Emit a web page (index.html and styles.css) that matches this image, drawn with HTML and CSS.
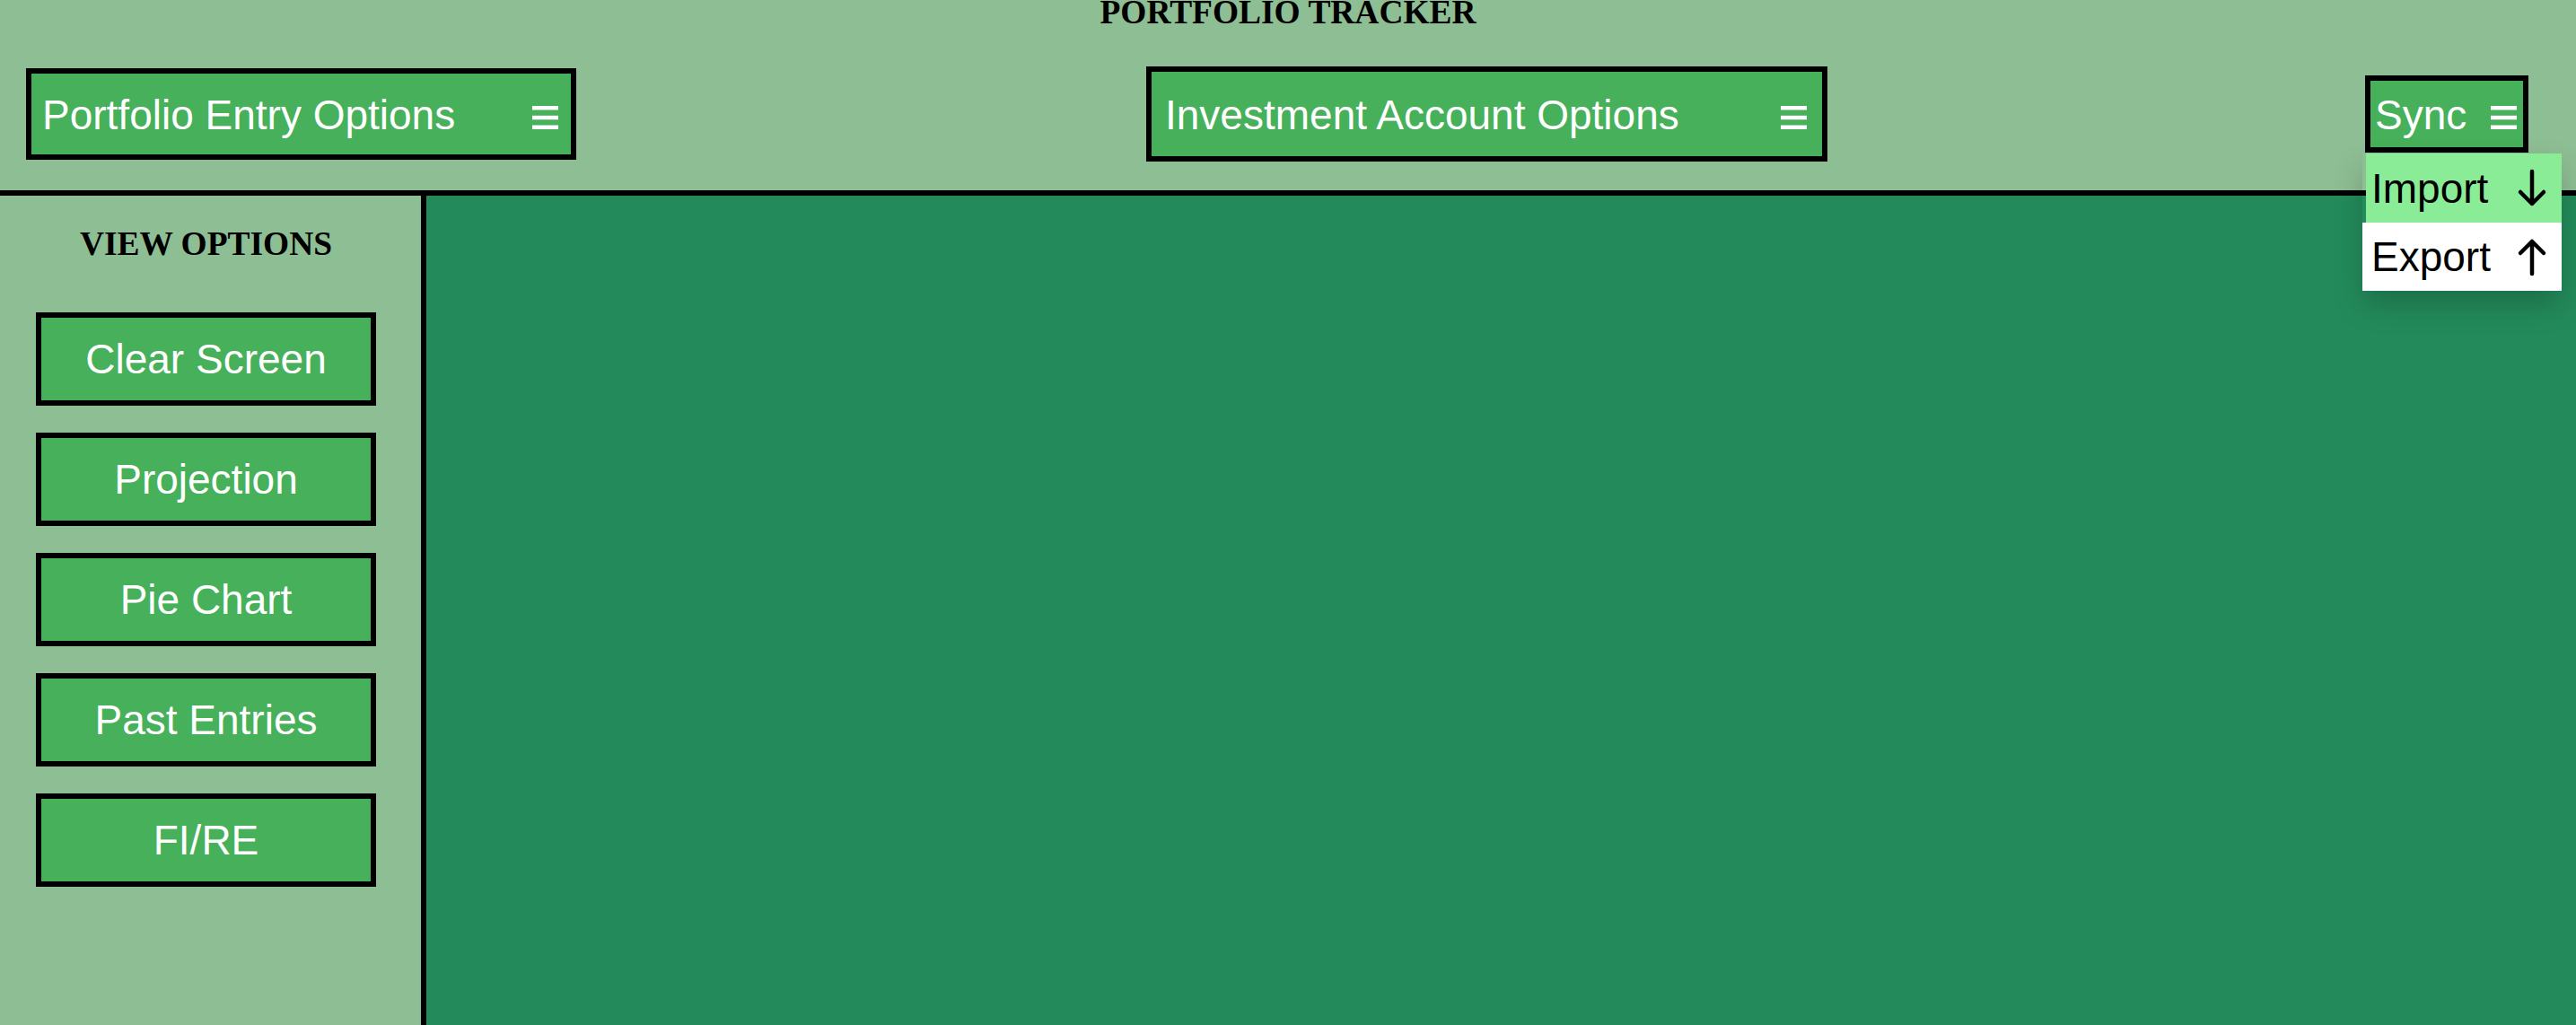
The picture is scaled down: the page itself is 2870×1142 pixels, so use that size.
FILE: index.html
```
<!DOCTYPE html>
<html lang="en">
<head>
<meta charset="utf-8">
<title>Portfolio Tracker</title>
<link rel="stylesheet" href="styles.css">
</head>
<body>
<header class="header">
  <h3 class="title">PORTFOLIO TRACKER</h3>
  <div class="toolbar">
    <div class="menu-btn entry">
      <span class="label">Portfolio Entry Options</span>
      <svg class="burger" width="29" height="26" viewBox="0 0 29 26"><rect x="0" y="0" width="29" height="4.5" fill="#fff"/><rect x="0" y="10.8" width="29" height="4.5" fill="#fff"/><rect x="0" y="21.5" width="29" height="4.5" fill="#fff"/></svg>
    </div>
    <div class="menu-btn invest">
      <span class="label">Investment Account Options</span>
      <svg class="burger" width="29" height="26" viewBox="0 0 29 26"><rect x="0" y="0" width="29" height="4.5" fill="#fff"/><rect x="0" y="10.8" width="29" height="4.5" fill="#fff"/><rect x="0" y="21.5" width="29" height="4.5" fill="#fff"/></svg>
    </div>
    <div class="sync-wrap">
      <div class="menu-btn sync">
        <span class="label">Sync</span>
        <svg class="burger" width="29" height="26" viewBox="0 0 29 26"><rect x="0" y="0" width="29" height="4.5" fill="#fff"/><rect x="0" y="10.8" width="29" height="4.5" fill="#fff"/><rect x="0" y="21.5" width="29" height="4.5" fill="#fff"/></svg>
      </div>
      <div class="dropdown">
        <div class="drop-item import">
          <span>Import</span>
          <svg width="34" height="43" viewBox="0 0 34 43"><path d="M17 3 V39 M4 26 L17 39 L30 26" fill="none" stroke="#000" stroke-width="4.5" stroke-linecap="round" stroke-linejoin="round"/></svg>
        </div>
        <div class="drop-item export">
          <span>Export</span>
          <svg width="34" height="43" viewBox="0 0 34 43"><path d="M17 40 V4 M4 17 L17 4 L30 17" fill="none" stroke="#000" stroke-width="4.5" stroke-linecap="round" stroke-linejoin="round"/></svg>
        </div>
      </div>
    </div>
  </div>
</header>
<div class="content">
  <aside class="sidebar">
    <h3 class="side-title">VIEW OPTIONS</h3>
    <div class="side-buttons">
      <div class="side-btn">Clear Screen</div>
      <div class="side-btn">Projection</div>
      <div class="side-btn">Pie Chart</div>
      <div class="side-btn">Past Entries</div>
      <div class="side-btn">FI/RE</div>
    </div>
  </aside>
  <main class="main"></main>
</div>
</body>
</html>
```
FILE: styles.css
```
html, body {
  margin: 0;
  padding: 0;
}
body {
  width: 2870px;
  height: 1142px;
  overflow: hidden;
  display: flex;
  flex-direction: column;
  background: #238b5b;
  font-family: "Liberation Sans", Arial, sans-serif;
}
.header {
  box-sizing: border-box;
  height: 218px;
  flex: none;
  background: #8ebe94;
  border-bottom: 6px solid #000;
  position: relative;
  z-index: 2;
}
.title {
  margin: 0;
  font-family: "Liberation Serif", "Times New Roman", serif;
  font-weight: 700;
  font-size: 37.44px;
  line-height: 28px;
  text-align: center;
  color: #000;
}
.toolbar {
  display: flex;
  align-items: center;
  height: 106px;
  margin-top: 46px;
  padding-left: 29px;
}
.menu-btn {
  box-sizing: border-box;
  display: flex;
  align-items: center;
  justify-content: space-between;
  border: 6px solid #000;
  background: #46b05a;
  color: #fff;
  font-size: 46px;
  white-space: nowrap;
}
.label {
  margin-top: 2px;
}
.burger {
  display: block;
  margin-top: 8px;
  flex: none;
}
.entry {
  width: 613px;
  height: 102px;
  padding: 0 14px 0 12px;
}
.invest {
  width: 759px;
  height: 106px;
  margin-left: 635px;
  padding: 0 17px 0 15px;
}
.sync-wrap {
  position: relative;
  margin-left: 599px;
}
.sync {
  width: 182px;
  height: 86px;
  padding: 0 7px 0 5px;
}
.dropdown {
  position: absolute;
  left: -3px;
  top: 87px;
  width: 222px;
  box-shadow: 0 16px 32px 0 rgba(0, 0, 0, 0.2);
  z-index: 5;
}
.drop-item {
  box-sizing: border-box;
  display: flex;
  align-items: center;
  justify-content: space-between;
  font-size: 46px;
  color: #000;
  padding-right: 16px;
}
.drop-item svg {
  display: block;
}
.import {
  height: 77px;
  margin-left: 4px;
  padding-left: 6px;
  background: #8aec96;
}
.export {
  height: 76px;
  padding-left: 10px;
  background: #fff;
}
.content {
  flex: 1;
  display: flex;
}
.sidebar {
  box-sizing: border-box;
  width: 475px;
  flex: none;
  background: #8ebe94;
  border-right: 6px solid #000;
  padding-right: 10px;
}
.side-title {
  margin: 40px 0 0 0;
  font-family: "Liberation Serif", "Times New Roman", serif;
  font-weight: 700;
  font-size: 37.44px;
  line-height: 28px;
  text-align: center;
  color: #000;
}
.side-buttons {
  display: flex;
  flex-direction: column;
  gap: 30px;
  margin-top: 62px;
  padding-left: 40px;
}
.side-btn {
  box-sizing: border-box;
  width: 379px;
  height: 104px;
  border: 6px solid #000;
  background: #46b05a;
  color: #fff;
  font-size: 46px;
  display: flex;
  align-items: center;
  justify-content: center;
}
.main {
  flex: 1;
  background: #238b5b;
}
```
